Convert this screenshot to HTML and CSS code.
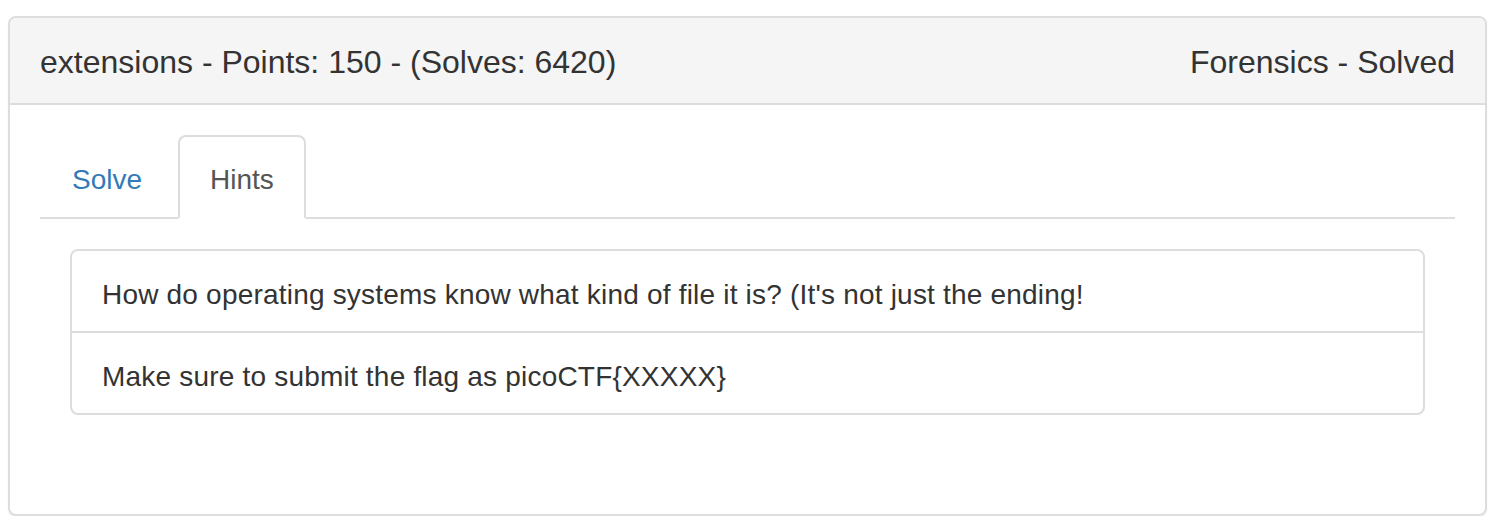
FILE: index.html
```html
<!DOCTYPE html>
<html>
<head>
<meta charset="utf-8">
<link rel="stylesheet" href="styles.css">
</head>
<body>
<div class="panel">
  <div class="panel-heading">
    <span class="title">extensions - Points: 150 - (Solves: 6420)</span>
    <span class="meta">Forensics - Solved</span>
  </div>
  <div class="panel-body">
    <ul class="nav-tabs">
      <li class="tab"><a class="tab-link">Solve</a></li>
      <li class="tab active"><a class="tab-link">Hints</a></li>
    </ul>
    <div class="tab-pane">
      <div class="list-group">
        <div class="list-item">How do operating systems know what kind of file it is? (It's not just the ending!</div>
        <div class="list-item">Make sure to submit the flag as picoCTF{XXXXX}</div>
      </div>
    </div>
  </div>
</div>
</body>
</html>
```

FILE: styles.css
```css
* { box-sizing: border-box; }
html, body { margin: 0; padding: 0; background: #fff; }
body {
  padding: 16px 15px 0 8px;
  font-family: "Liberation Sans", Arial, sans-serif;
  font-size: 28px;
  line-height: 40px;
  color: #333;
}
.panel {
  border: 2px solid #ddd;
  border-radius: 8px;
  background: #fff;
  box-shadow: 0 2px 2px rgba(0,0,0,0.05);
  height: 500px;
}
.panel-heading {
  display: flex;
  justify-content: space-between;
  align-items: center;
  padding: 22px 30px 18px;
  height: 87px;
  background: #f5f5f5;
  border-bottom: 2px solid #ddd;
  border-radius: 6px 6px 0 0;
  font-size: 32px;
  line-height: 45px;
}
.panel-body {
  padding: 30px;
}
.nav-tabs {
  display: flex;
  list-style: none;
  margin: 0;
  padding: 0;
  border-bottom: 2px solid #ddd;
}
.tab {
  margin-bottom: -2px;
  margin-right: 4px;
}
.tab-link {
  display: block;
  padding: 23px 30px 17px;
  border: 2px solid transparent;
  border-radius: 8px 8px 0 0;
  color: #337ab7;
  line-height: 40px;
}
.tab.active .tab-link {
  color: #555;
  background: #fff;
  border-color: #ddd #ddd transparent #ddd;
}
.tab-pane {
  padding: 30px;
}
.list-group {
  margin-bottom: 40px;
}
.list-item {
  padding: 24px 30px 16px;
  border: 2px solid #ddd;
  margin-bottom: -2px;
  background: #fff;
  letter-spacing: 0.2px;
}
.list-item:first-child {
  border-radius: 8px 8px 0 0;
}
.list-item:last-child {
  border-radius: 0 0 8px 8px;
  margin-bottom: 0;
}
```
